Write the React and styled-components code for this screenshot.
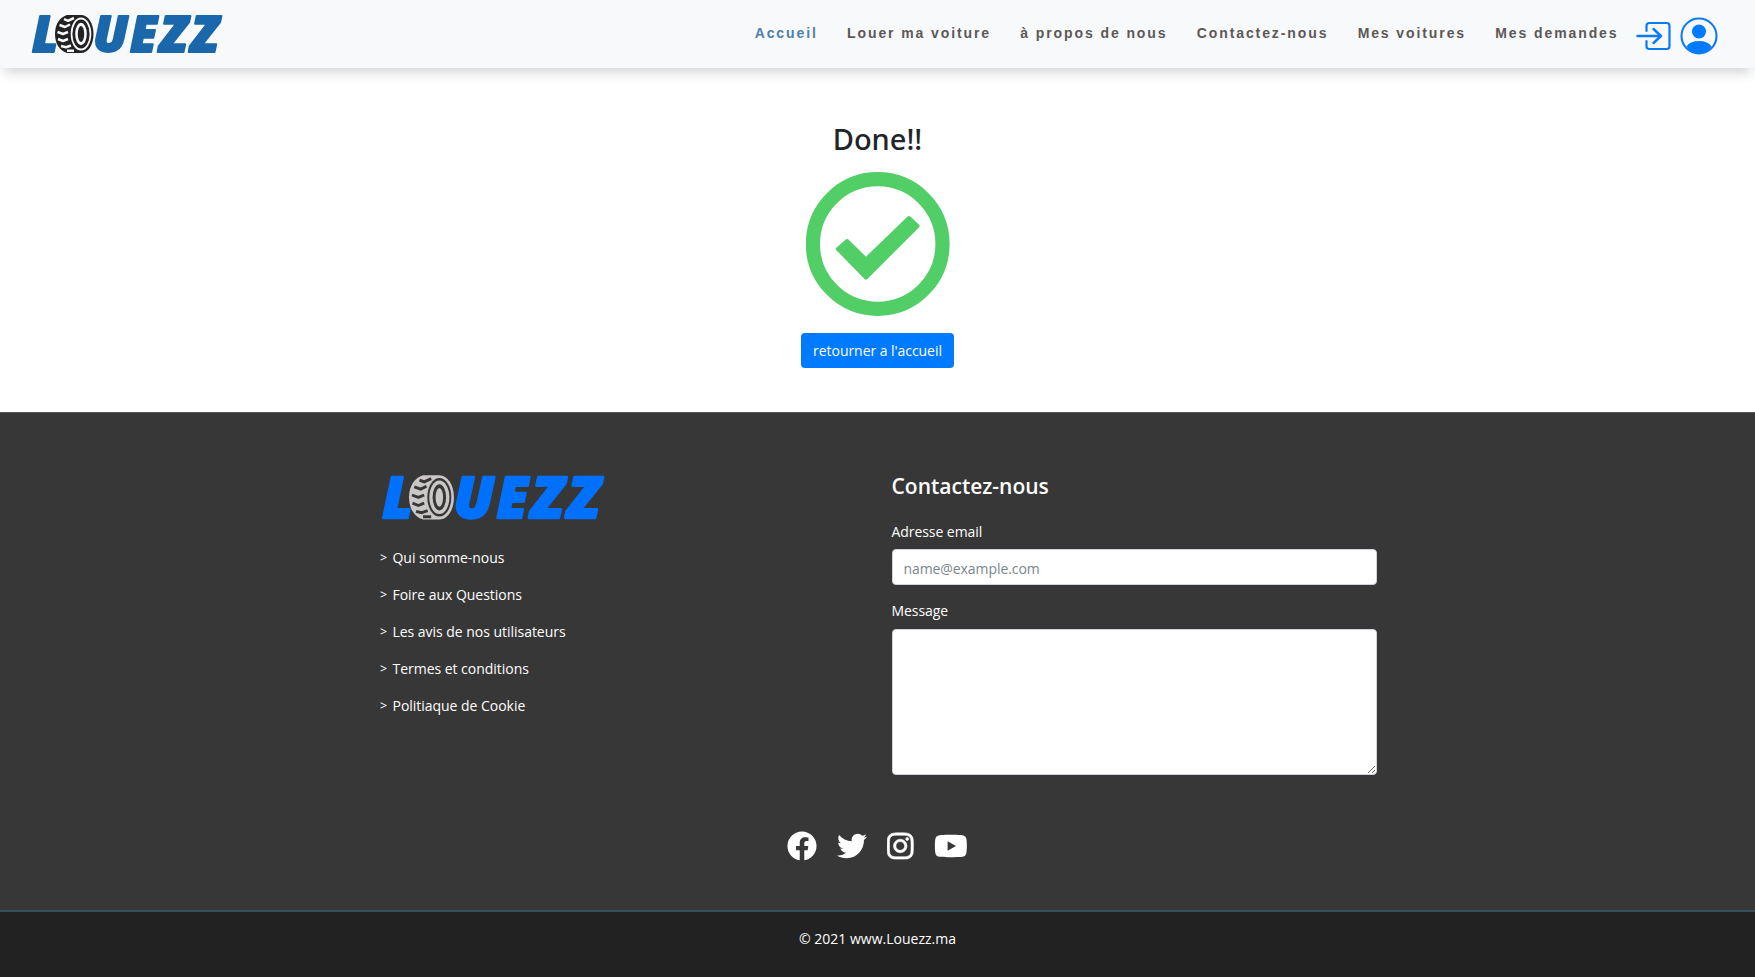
import React from "react";
import styled, { createGlobalStyle } from "styled-components";
import { FaFacebook, FaTwitter, FaInstagram, FaYoutube } from "react-icons/fa";

const GlobalStyle = createGlobalStyle`
  *, *::before, *::after { box-sizing: border-box; }
  body {
    margin: 0;
    background: #fff;
    color: #212529;
    font: 400 14px/22px "Open Sans", "Noto Sans", sans-serif;
  }
`;

const Page = styled.div`
  display: flex;
  flex-direction: column;
  height: 977px;
  overflow: hidden;
`;

const Header = styled.header`
  display: flex;
  flex: none;
  align-items: flex-start;
  justify-content: space-between;
  height: 68px;
  padding: 0 37px 0 31px;
  background: #f8f9fb;
  box-shadow: 0 9px 11px -4px rgba(0, 0, 0, 0.16);
`;

const LogoSvg = styled.svg`
  display: block;
  flex: none;
  width: ${(p) => p.$width}px;
  height: ${(p) => (p.$width * 40) / 192}px;
  margin: ${(p) => p.$margin};
  overflow: visible;
`;

const Letter = styled.text`
  font: italic 800 49px "Open Sans", sans-serif;
  fill: ${(p) => p.$color};
  stroke: ${(p) => p.$color};
  stroke-width: 2px;
  stroke-linejoin: round;
`;

const Nav = styled.nav`
  display: flex;
  align-items: flex-start;
`;

const NavLink = styled.a`
  margin: 22px 29.3px 0 0;
  color: ${(p) => (p.$active ? "#4f80aa" : "#5c5857")};
  font: 700 14px/22px "Liberation Sans", Arial, sans-serif;
  letter-spacing: 1.9px;
  white-space: nowrap;
  text-decoration: none;

  &:last-of-type { margin-right: 16.5px; }
`;

const NavIcon = styled.svg`
  display: block;
  width: 38px;
  height: 38px;
  margin: 17px 0 0 ${(p) => p.$gap || 0}px;
  fill: none;
  stroke: #0b7bf5;
  stroke-linecap: round;
  stroke-linejoin: round;
`;

const Main = styled.main`
  display: flex;
  flex: none;
  flex-direction: column;
  align-items: center;
  height: 344px;
  padding-top: 53px;
`;

const Title = styled.h2`
  margin: 0;
  font: 500 29px/35px "Noto Sans", sans-serif;
`;

const CheckMark = styled.svg`
  display: block;
  width: 144px;
  height: 144px;
  margin-top: 16px;
`;

const HomeButton = styled.button`
  width: 153px;
  height: 35px;
  margin-top: 17px;
  padding: 0;
  border: 0;
  border-radius: 4px;
  background: #007bff;
  color: #fff;
  font: inherit;
  letter-spacing: -0.05px;
`;

const Footer = styled.footer`
  display: flex;
  flex: none;
  flex-direction: column;
  height: 498px;
  border-top: 1px solid #555;
  background: #373737;
  color: #fff;
`;

const Columns = styled.div`
  display: grid;
  grid-template-columns: 511.5px 485px;
  height: 417.5px;
  padding: 61px 0 0 380px;
`;

const LinkList = styled.ul`
  display: grid;
  gap: 15px;
  margin: 26.2px 0 0;
  padding: 0;
  list-style: none;
`;

const LinkItem = styled.li`
  display: flex;
  line-height: 22px;
  letter-spacing: -0.03px;

  &::before {
    content: ">";
    width: 12.5px;
    font-size: 12.5px;
  }
`;

const Form = styled.form`
  display: flex;
  flex-direction: column;
`;

const FormTitle = styled.h5`
  margin: -1px 0 22px;
  font-size: 21px;
  font-weight: 600;
  line-height: 26px;
`;

const Label = styled.label`
  margin-bottom: 6px;
  line-height: 22px;
  letter-spacing: -0.06px;
`;

const Input = styled.input`
  height: 36px;
  margin-bottom: 15px;
  padding: 2px 11px 0;
  border: 1px solid #ced4da;
  border-radius: 4px;
  background: #fff;
  font: inherit;
  letter-spacing: -0.08px;

  &::placeholder { color: #7b858d; opacity: 1; }
`;

const TextArea = styled.textarea`
  height: 146px;
  margin-top: 1px;
  padding: 6px 12px;
  border: 1px solid #ced4da;
  border-radius: 4px;
  background: #fff;
  font: inherit;
  resize: vertical;
`;

const Social = styled.div`
  display: flex;
  justify-content: center;
  gap: 20px;
  height: 30px;

  svg { display: block; width: 30px; height: 30px; }
  svg:nth-child(3) {
    width: 26.5px;
    stroke: #fff;
    stroke-width: 10px;
  }
  svg:nth-child(4) { width: 33.75px; }
`;

const Copyright = styled.div`
  flex: 1;
  padding-top: 16px;
  border-top: 2px solid #35505f;
  background: #222;
  color: #fff;
  text-align: center;
`;

const LETTERS = [
  ["L", 1, 26],
  ["U", 62, 35],
  ["E", 99, 27],
  ["Z", 129, 27.5],
  ["Z", 160, 27.5],
];

function Logo({ width, margin, color, tire, gap }) {
  return (
    <LogoSvg viewBox="0 0 192 40" $width={width} $margin={margin}>
      {LETTERS.map(([char, x, length], i) => (
        <Letter key={i} x={x} y="37.6" textLength={length} lengthAdjust="spacingAndGlyphs" $color={color}>
          {char}
        </Letter>
      ))}
      <path d="M36 1H50C57 1 62.5 9 62.5 20S57 39 50 39H36C29 37 24 30 24 20S29 3 36 1Z" fill={tire} />
      <ellipse cx="50" cy="20" rx="10.3" ry="16.5" fill={gap} />
      <ellipse cx="50" cy="20" rx="8.6" ry="14.4" fill={tire} />
      <ellipse cx="50" cy="20" rx="5.8" ry="11.2" fill={gap} />
      <ellipse cx="50" cy="20" rx="3.2" ry="8" fill={tire} />
      <path
        d="M33 5.2L37 6.8L43 4M28.5 11L34 13L39 10.5M26.5 18L32 20L37 18M27 25L32 27L37 25M30 32L35 33.2L40 31.5M36 36.7L43 36.7"
        fill="none"
        stroke={gap}
        strokeWidth="2.5"
        strokeLinejoin="round"
      />
    </LogoSvg>
  );
}

const NAV = ["Accueil", "Louer ma voiture", "à propos de nous", "Contactez-nous", "Mes voitures", "Mes demandes"];
const LINKS = [
  "Qui somme-nous",
  "Foire aux Questions",
  "Les avis de nos utilisateurs",
  "Termes et conditions",
  "Politiaque de Cookie",
];

export default function App() {
  return (
    <Page>
      <GlobalStyle />
      <Header>
        <Logo width={192} margin="14px 0 0" color="#1a67ab" tire="#222" gap="#f8f9fb" />
        <Nav>
          {NAV.map((label, i) => (
            <NavLink key={label} $active={i === 0}>{label}</NavLink>
          ))}
          <NavIcon viewBox="0 0 38 38" strokeWidth="2.2">
            <path d="M11.5 14V8.7Q11.5 6 14.2 6H31.8Q34.5 6 34.5 8.7V29.3Q34.5 32 31.8 32H14.2Q11.5 32 11.5 29.3V24" />
            <path d="M2.5 19H26M18.5 12L26 19L18.5 26" strokeWidth="2.4" />
          </NavIcon>
          <NavIcon viewBox="0 0 38 38" strokeWidth="2.1" $gap={7}>
            <circle cx="19" cy="19" r="17.5" />
            <circle cx="19" cy="14.5" r="7" fill="#007bff" stroke="none" />
            <path d="M6.5 29.5Q10 24 19 24T31.5 29.5Q27 36.5 19 36.5T6.5 29.5Z" fill="#007bff" stroke="none" />
          </NavIcon>
        </Nav>
      </Header>
      <Main>
        <Title>Done!!</Title>
        <CheckMark viewBox="0 0 144 144">
          <circle cx="71.7" cy="72" r="64.8" fill="none" stroke="#51cf66" strokeWidth="14.2" />
          <path
            d="M32 77L41 69L60 87.5L103 46L111.5 54L60 105.5Z"
            fill="#51cf66"
            stroke="#51cf66"
            strokeWidth="4"
            strokeLinejoin="round"
          />
        </CheckMark>
        <HomeButton>retourner a l'accueil</HomeButton>
      </Main>
      <Footer>
        <Columns>
          <div>
            <Logo width={224} margin="0 0 0 1px" color="#0070ff" tire="#cbc7c7" gap="#373737" />
            <LinkList>
              {LINKS.map((label) => (
                <LinkItem key={label}>{label}</LinkItem>
              ))}
            </LinkList>
          </div>
          <Form>
            <FormTitle>Contactez-nous</FormTitle>
            <Label>Adresse email</Label>
            <Input type="email" placeholder="name@example.com" />
            <Label>Message</Label>
            <TextArea />
          </Form>
        </Columns>
        <Social>
          <FaFacebook />
          <FaTwitter />
          <FaInstagram />
          <FaYoutube />
        </Social>
      </Footer>
      <Copyright>© 2021 www.Louezz.ma</Copyright>
    </Page>
  );
}
